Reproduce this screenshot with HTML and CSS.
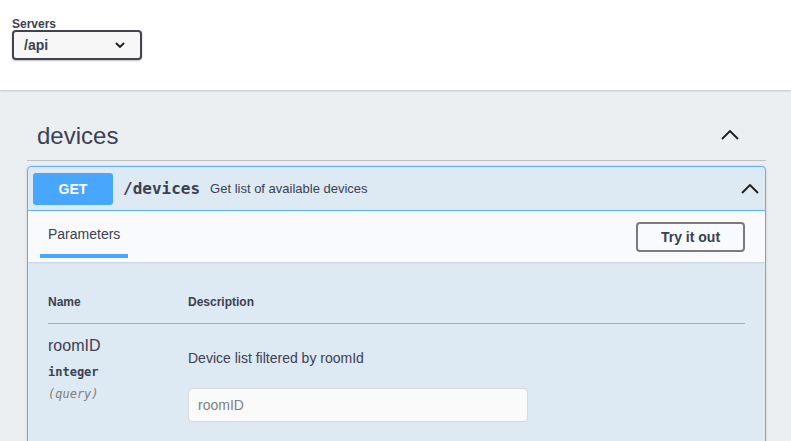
FILE: index.html
```html
<!DOCTYPE html>
<html lang="en">
<head>
<meta charset="utf-8">
<title>Swagger UI</title>
<link rel="stylesheet" href="styles.css">
</head>
<body>
<div class="topbar">
  <div class="servers">
    <span class="servers-label">Servers</span>
    <div class="select">
      <span>/api</span>
      <svg class="select-arrow" width="10" height="6" viewBox="0 0 10 6"><polyline points="1,1 5,5 9,1" fill="none" stroke="#1b1b1b" stroke-width="1.8"/></svg>
    </div>
  </div>
</div>
<div class="wrapper">
  <div class="tag">
    <span class="tag-name">devices</span>
    <svg class="chevron" width="18" height="10" viewBox="0 0 18 10"><polyline points="1,9 9,1 17,9" fill="none" stroke="#1b1b1b" stroke-width="1.8"/></svg>
  </div>
  <div class="opblock">
    <div class="op-summary">
      <span class="method">GET</span>
      <span class="path">/devices</span>
      <span class="summary-desc">Get list of available devices</span>
      <svg class="chevron op-chevron" width="18" height="10" viewBox="0 0 18 10"><polyline points="1,9 9,1 17,9" fill="none" stroke="#1b1b1b" stroke-width="1.8"/></svg>
    </div>
    <div class="section-header">
      <div class="tab">Parameters</div>
      <button class="try-out">Try it out</button>
    </div>
    <div class="params">
      <div class="params-head">
        <div class="col-name">Name</div>
        <div class="col-desc">Description</div>
      </div>
      <div class="param-row">
        <div class="col-name">
          <div class="param-name">roomID</div>
          <div class="param-type">integer</div>
          <div class="param-in">(query)</div>
        </div>
        <div class="col-desc">
          <div class="param-desc">Device list filtered by roomId</div>
          <div class="input">roomID</div>
        </div>
      </div>
    </div>
  </div>
</div>
</body>
</html>
```
FILE: styles.css
```css
* { box-sizing: border-box; }
body {
  margin: 0;
  background: #ebeff2;
  font-family: "Liberation Sans", Arial, sans-serif;
  color: #3b4151;
}
.topbar {
  background: #fff;
  height: 90px;
  box-shadow: 0 1px 2px rgba(0,0,0,0.18);
  padding: 18px 12px 0;
}
.servers { display: flex; flex-direction: column; align-items: flex-start; }
.servers-label {
  font-size: 12px;
  font-weight: bold;
  line-height: 12px;
}
.select {
  width: 130px;
  height: 30px;
  border: 2px solid #41444e;
  border-radius: 4px;
  background: #f7f7f7;
  box-shadow: 0 1px 2px rgba(0,0,0,0.25);
  display: flex;
  align-items: center;
  justify-content: space-between;
  padding: 0 15px 0 10px;
  font-size: 14px;
  font-weight: bold;
  color: #3b4151;
}
.select-arrow { display: block; }
.wrapper {
  padding: 20px 25px 40px 27px;
}
.tag {
  height: 51px;
  display: flex;
  align-items: center;
  justify-content: space-between;
  padding: 0 27px 0 10px;
  border-bottom: 1px solid #bcc0c5;
}
.tag-name {
  font-size: 24px;
  line-height: 24px;
  color: #3b4151;
  padding-top: 1px;
}
.chevron { display: block; }
.opblock {
  margin-top: 5px;
  border: 1px solid #61affe;
  border-radius: 4px;
  background: #dde9f3;
  box-shadow: 0 0 3px rgba(0,0,0,0.12);
}
.op-summary {
  display: flex;
  align-items: center;
  padding: 5px 6px 5px 5px;
  border-bottom: 1px solid #61affe;
  height: 44px;
}
.method {
  width: 80px;
  height: 32px;
  background: #49a6fd;
  border-radius: 3px;
  color: #fff;
  font-size: 14px;
  font-weight: bold;
  display: flex;
  align-items: center;
  justify-content: center;
}
.path {
  margin-left: 10px;
  font-family: "DejaVu Sans Mono", monospace;
  font-weight: bold;
  font-size: 16px;
  color: #3b4151;
  padding-right: 10px;
}
.summary-desc {
  font-size: 13px;
  color: #3b4151;
  flex: 1;
}
.section-header {
  height: 51px;
  background: #f8fafd;
  box-shadow: 0 1px 2px rgba(0,0,0,0.1);
  display: flex;
  align-items: center;
  justify-content: space-between;
  padding: 0 20px 0 12px;
  position: relative;
}
.tab {
  align-self: stretch;
  display: flex;
  align-items: center;
  padding: 2px 8px 0;
  font-size: 14px;
  color: #3b4151;
  border-bottom: 4px solid #49a6fd;
  margin-bottom: 4px;
}
.try-out {
  width: 109px;
  height: 30px;
  border: 2px solid #7b7b7b;
  border-radius: 4px;
  background: transparent;
  font-family: "Liberation Sans", Arial, sans-serif;
  font-size: 14px;
  font-weight: bold;
  color: #3b4151;
  margin-top: 1px;
}
.params {
  padding: 33px 20px 30px;
}
.params-head {
  display: flex;
  font-size: 12px;
  font-weight: bold;
  line-height: 15px;
  padding-bottom: 13px;
  border-bottom: 1px solid #a3adb8;
}
.col-name { width: 140px; flex: none; }
.col-desc { flex: 1; }
.param-row { display: flex; }
.param-row .col-name { padding-top: 12px; }
.param-name { font-size: 16px; line-height: 20px; }
.param-type {
  margin-top: 8px;
  font-family: "DejaVu Sans Mono", monospace;
  font-weight: bold;
  font-size: 12px;
  line-height: 16px;
}
.param-in {
  margin-top: 6px;
  font-family: "DejaVu Sans Mono", monospace;
  font-style: italic;
  font-size: 12px;
  line-height: 16px;
  color: #808080;
}
.param-row .col-desc { padding-top: 25px; }
.param-desc { font-size: 14px; line-height: 18px; }
.input {
  margin-top: 21px;
  width: 340px;
  height: 34px;
  background: #fafafa;
  border: 1px solid #d9d9d9;
  border-radius: 4px;
  padding: 0 9px;
  display: flex;
  align-items: center;
  font-size: 14px;
  color: #7e8186;
}
```
